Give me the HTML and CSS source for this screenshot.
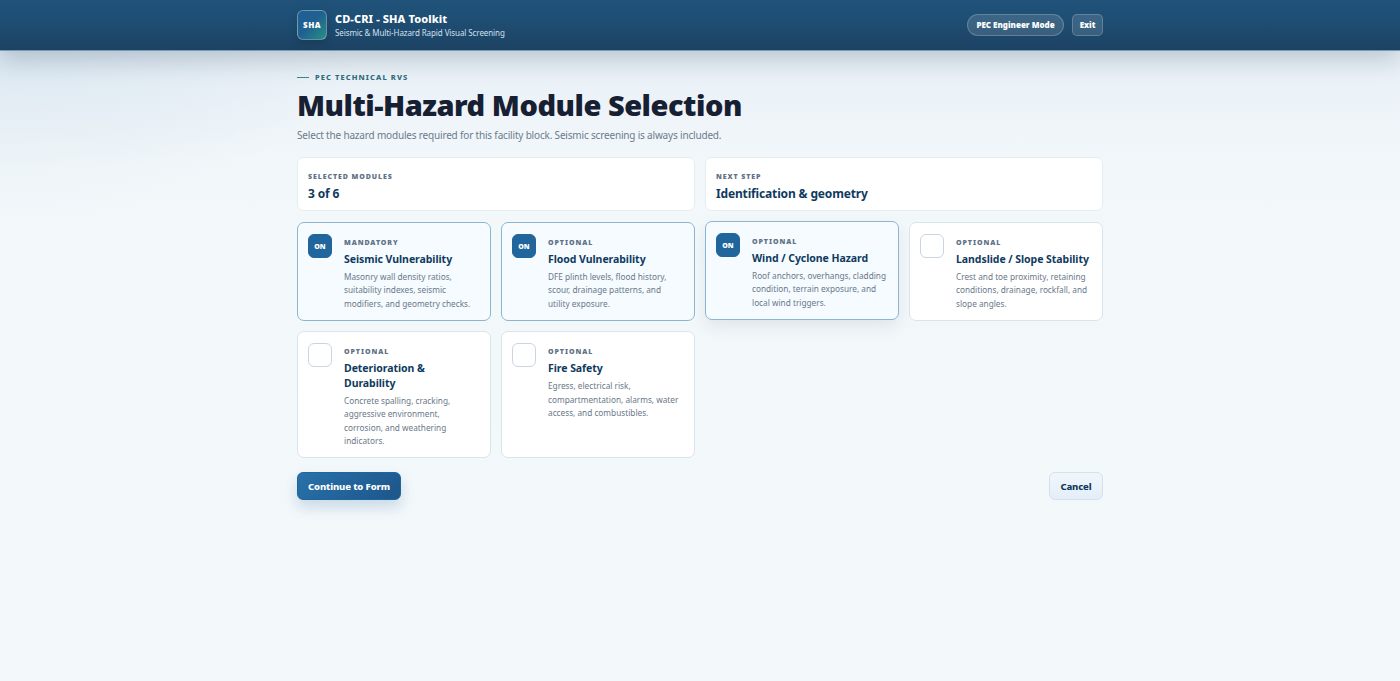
FILE: index.html
```
<!DOCTYPE html>
<html lang="en">
<head>
  <meta charset="UTF-8">
  <meta name="viewport" content="width=device-width, initial-scale=1.0">
  <title>CD-CRI - SHA Toolkit</title>
  <link rel="stylesheet" href="styles.css">
</head>
<body>
  <!-- Top bar -->
  <header class="topbar">
    <div class="container topbar-inner">
      <div class="brand">
        <div class="brand-mark">SHA</div>
        <div>
          <div class="brand-title">CD-CRI - SHA Toolkit</div>
          <div class="brand-sub">Seismic &amp; Multi-Hazard Rapid Visual Screening</div>
        </div>
      </div>
      <nav class="topbar-actions">
        <span class="mode-pill">PEC Engineer Mode</span>
        <a class="exit-btn">Exit</a>
      </nav>
    </div>
  </header>

  <main class="container">
    <p class="eyebrow">PEC Technical RVS</p>
    <h1>Multi-Hazard Module Selection</h1>
    <p class="lead">Select the hazard modules required for this facility block. Seismic screening is always included.</p>

    <!-- Summary -->
    <section class="summary-grid">
      <div class="summary-card">
        <span class="label">Selected Modules</span>
        <strong>3 of 6</strong>
      </div>
      <div class="summary-card">
        <span class="label">Next Step</span>
        <strong>Identification &amp; geometry</strong>
      </div>
    </section>

    <!-- Hazard modules -->
    <section class="module-grid">
      <div class="module-card selected">
        <span class="check">ON</span>
        <div class="module-body">
          <span class="label">Mandatory</span>
          <h3>Seismic Vulnerability</h3>
          <p>Masonry wall density ratios,<br>suitability indexes, seismic<br>modifiers, and geometry checks.</p>
        </div>
      </div>
      <div class="module-card selected">
        <span class="check">ON</span>
        <div class="module-body">
          <span class="label">Optional</span>
          <h3>Flood Vulnerability</h3>
          <p>DFE plinth levels, flood history,<br>scour, drainage patterns, and<br>utility exposure.</p>
        </div>
      </div>
      <div class="module-card selected raised">
        <span class="check">ON</span>
        <div class="module-body">
          <span class="label">Optional</span>
          <h3>Wind / Cyclone Hazard</h3>
          <p>Roof anchors, overhangs, cladding<br>condition, terrain exposure, and<br>local wind triggers.</p>
        </div>
      </div>
      <div class="module-card">
        <span class="check"></span>
        <div class="module-body">
          <span class="label">Optional</span>
          <h3>Landslide / Slope Stability</h3>
          <p>Crest and toe proximity, retaining<br>conditions, drainage, rockfall, and<br>slope angles.</p>
        </div>
      </div>
      <div class="module-card">
        <span class="check"></span>
        <div class="module-body">
          <span class="label">Optional</span>
          <h3>Deterioration &amp;<br>Durability</h3>
          <p>Concrete spalling, cracking,<br>aggressive environment,<br>corrosion, and weathering<br>indicators.</p>
        </div>
      </div>
      <div class="module-card">
        <span class="check"></span>
        <div class="module-body">
          <span class="label">Optional</span>
          <h3>Fire Safety</h3>
          <p>Egress, electrical risk,<br>compartmentation, alarms, water<br>access, and combustibles.</p>
        </div>
      </div>
    </section>

    <div class="actions">
      <button class="btn btn-primary">Continue to Form</button>
      <button class="btn btn-light">Cancel</button>
    </div>
  </main>
</body>
</html>
```
FILE: styles.css
```
* {
  box-sizing: border-box;
}
body {
  margin: 0;
  min-height: 681px;
  font-family: "Segoe UI", "Noto Sans", "Open Sans", sans-serif;
  color: #172033;
  background:
    radial-gradient(ellipse 380px 220px at 0 0, rgba(31, 104, 158, 0.09), rgba(31, 104, 158, 0) 100%),
    linear-gradient(180deg, #e4edf5 0, #f2f7fa 165px, #f3f8fb 100%);
}
h1, h3, p {
  margin: 0;
}
.container {
  width: 806px;
  margin: 0 auto;
}

/* Top bar */
.topbar {
  height: 51px;
  background: linear-gradient(180deg, #20527a 0, #1e4e73 40%, #1d4263 100%);
  border-bottom: 1px solid #6f9fb8;
  box-shadow: 0 9px 24px rgba(16, 42, 67, 0.2);
}
.topbar-inner {
  display: flex;
  align-items: center;
  justify-content: space-between;
  height: 49px;
}
.brand {
  display: flex;
  align-items: center;
  gap: 8px;
}
.brand-mark {
  display: flex;
  align-items: center;
  justify-content: center;
  width: 30px;
  height: 30px;
  border: 1px solid rgba(255, 255, 255, 0.3);
  border-radius: 6px;
  background: linear-gradient(135deg, #1f5f96 0, #205f90 45%, #279083 100%);
  box-shadow: 0 3px 8px rgba(0, 0, 0, 0.15);
  color: #fff;
  font-size: 8px;
  font-weight: 900;
  letter-spacing: 0.4px;
}
.brand-title {
  color: #fff;
  font-size: 11px;
  font-weight: 800;
  line-height: 15px;
  letter-spacing: 0.1px;
}
.brand-sub {
  color: #cfe0ee;
  font-size: 8px;
  line-height: 13px;
  letter-spacing: -0.09px;
}
.topbar-actions {
  display: flex;
  gap: 8px;
}
.mode-pill,
.exit-btn {
  display: flex;
  align-items: center;
  justify-content: center;
  height: 22px;
  border: 1px solid rgba(255, 255, 255, 0.2);
  background: rgba(255, 255, 255, 0.13);
  color: #fff;
  font-size: 8px;
  font-weight: 900;
}
.mode-pill {
  width: 97px;
  border-radius: 11px;
}
.exit-btn {
  width: 31px;
  border-radius: 5px;
}

/* Page heading */
.eyebrow {
  display: flex;
  align-items: center;
  gap: 6px;
  padding-top: 20px;
  color: #2b6c78;
  font-size: 7.5px;
  font-weight: 800;
  line-height: 12px;
  letter-spacing: 1.1px;
  text-transform: uppercase;
}
.eyebrow::before {
  content: "";
  width: 12px;
  height: 1px;
  background: #2f8a8a;
}
h1 {
  margin-top: 3px;
  font-size: 29px;
  font-weight: 900;
  line-height: 38px;
  letter-spacing: -0.48px;
  white-space: nowrap;
}
.lead {
  margin-top: 3px;
  color: #6b7b8d;
  font-size: 10px;
  line-height: 16px;
  letter-spacing: -0.18px;
}

/* Summary */
.summary-grid {
  display: grid;
  grid-template-columns: 1fr 1fr;
  gap: 10px;
  margin-top: 14px;
}
.summary-card {
  height: 54px;
  padding: 13px 10px 0;
  border: 1px solid #e5ecf2;
  border-radius: 6px;
  background: #fff;
}
.label {
  display: block;
  color: #5f7186;
  font-size: 7px;
  font-weight: 900;
  line-height: 11px;
  letter-spacing: 0.92px;
  text-transform: uppercase;
}
.summary-card strong {
  display: block;
  margin-top: 3px;
  color: #0f3a60;
  font-size: 12px;
  font-weight: 700;
  line-height: 17px;
  letter-spacing: -0.15px;
}

/* Module cards */
.module-grid {
  display: grid;
  grid-template-columns: repeat(4, minmax(0, 1fr));
  gap: 10px;
  margin-top: 11px;
}
.module-card {
  display: flex;
  gap: 12px;
  min-height: 99px;
  padding: 11px 6px 10px 10px;
  border: 1px solid #d9e4ec;
  border-radius: 7px;
  background: #fff;
}
.module-card.selected {
  border-color: #8db5d2;
  background: #f5fbff;
}
.module-card.raised {
  transform: translateY(-1px);
  box-shadow: 0 7px 16px rgba(16, 42, 67, 0.08);
}
.check {
  display: flex;
  flex: none;
  align-items: center;
  justify-content: center;
  width: 24px;
  height: 24px;
  border: 1px solid #cbd5e1;
  border-radius: 6px;
  color: #fff;
  font-size: 7px;
  font-weight: 900;
}
.selected .check {
  border-color: #20659b;
  background: #20659b;
}
.module-body {
  flex: 1;
  min-width: 0;
  padding-top: 3px;
}
.module-body h3 {
  margin-top: 4px;
  color: #0f3a60;
  font-size: 10.5px;
  font-weight: 700;
  line-height: 14.5px;
  letter-spacing: -0.05px;
  white-space: nowrap;
}
.module-body p {
  margin-top: 3.5px;
  color: #6a7889;
  font-size: 8.25px;
  line-height: 13.4px;
  white-space: nowrap;
}

/* Buttons */
.actions {
  display: flex;
  justify-content: space-between;
  margin-top: 14px;
}
.btn {
  height: 28px;
  padding: 0;
  border-radius: 6px;
  font-family: inherit;
  font-size: 9.5px;
  font-weight: 800;
  letter-spacing: -0.12px;
}
.btn-primary {
  width: 104px;
  border: 1px solid #20659b;
  background: linear-gradient(135deg, #2871aa, #1d568a);
  box-shadow: 0 7px 14px rgba(31, 95, 145, 0.2);
  color: #fff;
}
.btn-light {
  width: 54px;
  border: 1px solid #d5e1eb;
  background: linear-gradient(180deg, #f0f6fb, #e4eef8);
  color: #0f3a60;
}
```
